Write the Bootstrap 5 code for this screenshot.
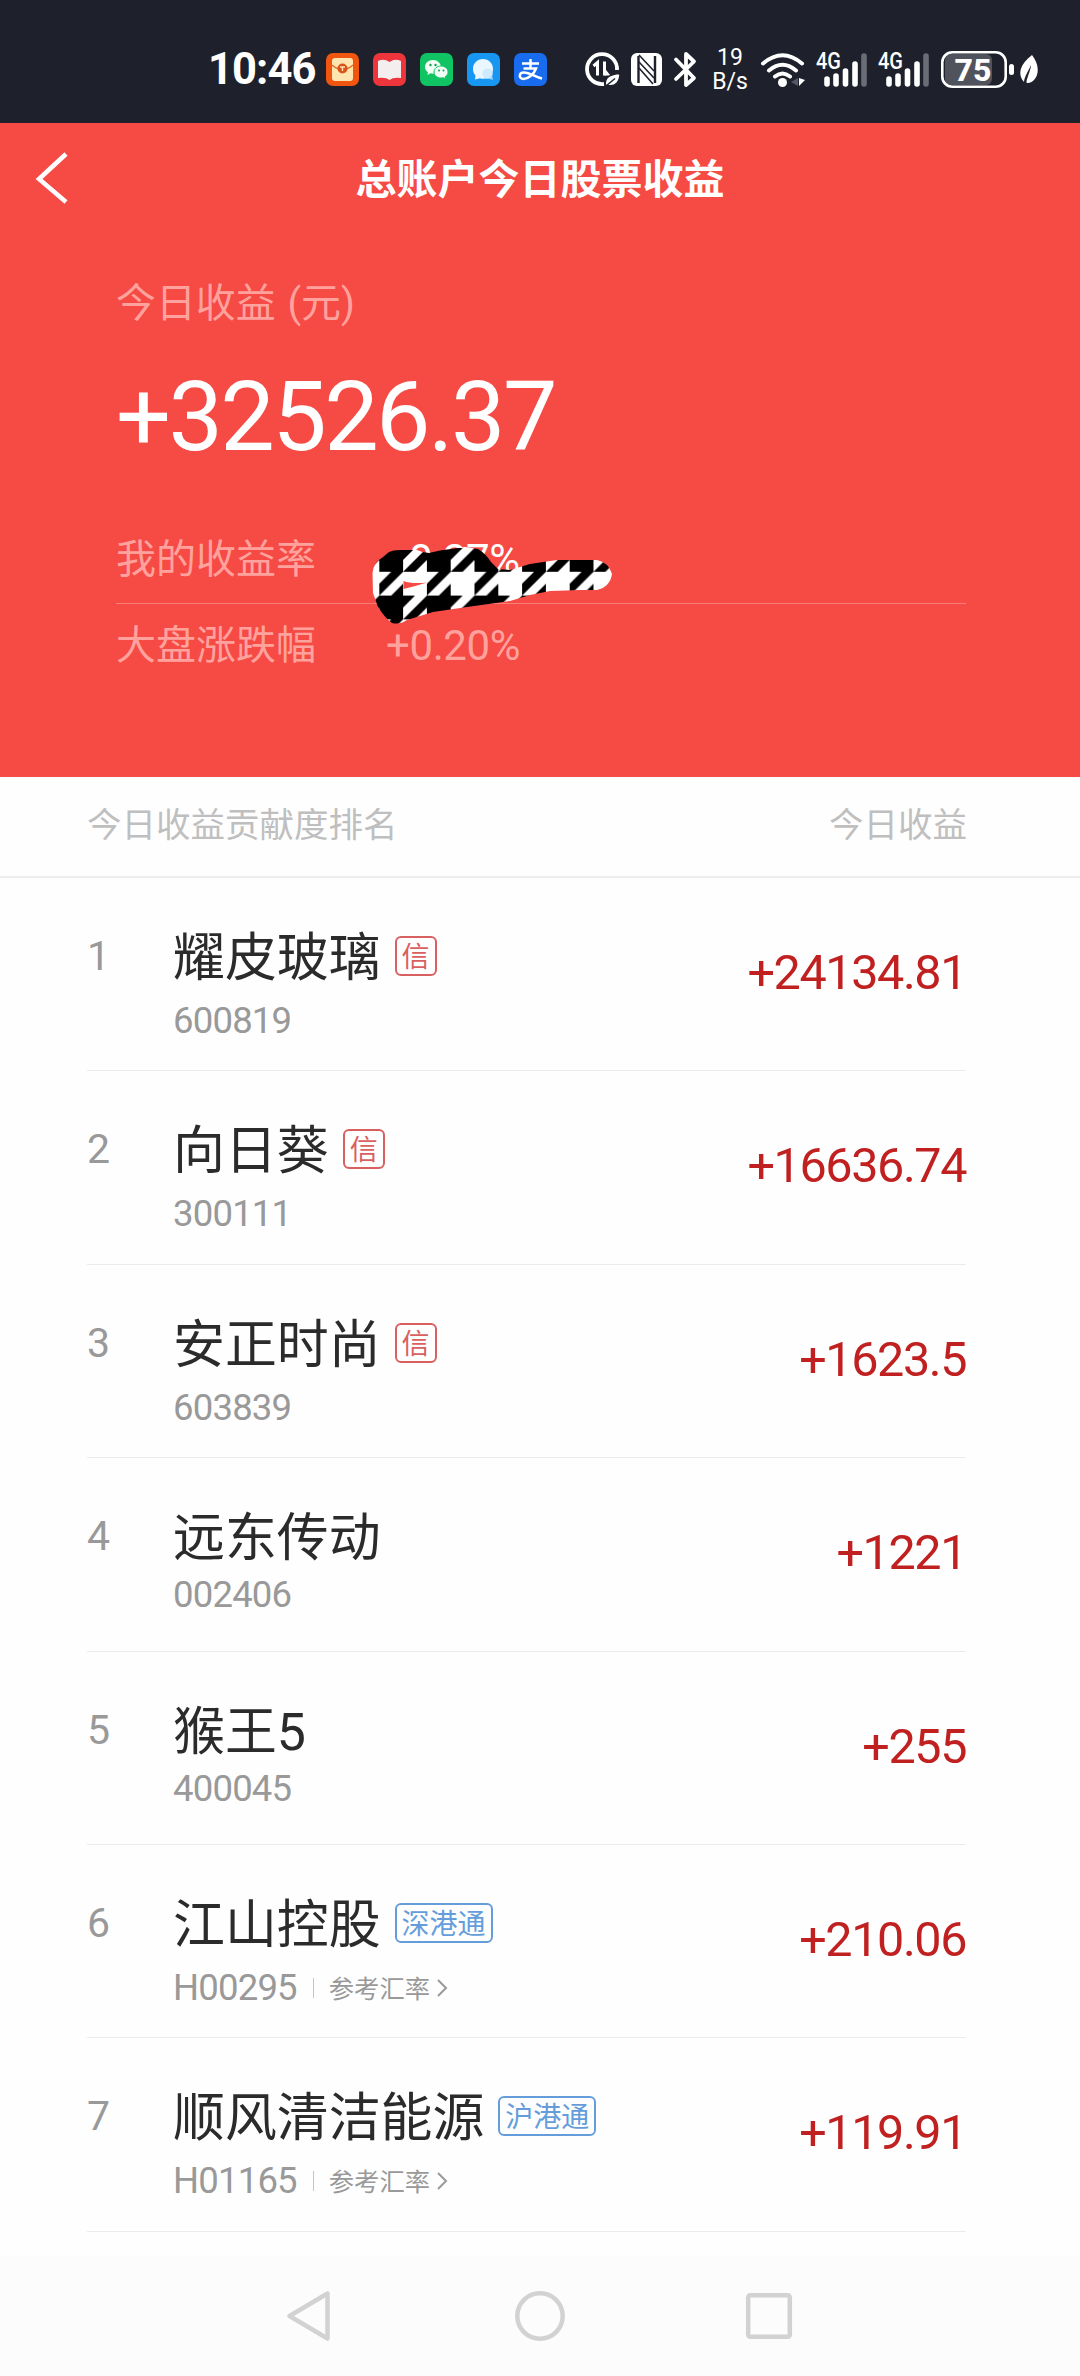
<!DOCTYPE html>
<html lang="zh-CN">
<head>
<meta charset="utf-8">
<meta name="viewport" content="width=device-width, initial-scale=1">
<title>总账户今日股票收益</title>
<link href="https://cdn.jsdelivr.net/npm/bootstrap@5.3.0/dist/css/bootstrap.min.css" rel="stylesheet">
<style>
  body { font-family: Roboto, "Noto Sans CJK SC", sans-serif; background: #fefefe; color: #2b2b2b; height: 2376px; overflow: hidden; }
  svg { display: block; flex: none; overflow: visible; }
  .status-bar { height: 123px; background: #1e212b; padding: 16px 0 0 208px; }
  .clock { font-size: 43.5px; font-weight: 700; line-height: 50px; width: 118px; letter-spacing: -.9px; }
  .app-icons { gap: 14px; width: 259px; }
  .net-speed { width: 48px; font-size: 23px; line-height: 24px; margin-left: 10px; }
  .nfc { margin-left: 11px; }
  .bluetooth { margin-left: 12px; }
  .wifi { margin-left: 7px; }
  .sig, .battery { margin-left: 11px; }
  .battery { margin-left: 12px; }
  .leaf { margin-left: 5px; }
  .hero { height: 654px; background: #f64a45; }
  .title-bar { height: 113px; }
  .title-bar h1 { font-size: 41px; font-weight: 700; line-height: 60px; }
  .back-btn { left: 35px; top: 29px; }
  .hero-body { padding: 38px 114px 0 116px; }
  .soft { color: #ffa29d; }
  .hero-label { font-size: 39.9px; line-height: 60px; word-spacing: 2px; }
  .hero-total { font-size: 97px; line-height: 110px; letter-spacing: -2.6px; margin-top: 28px; }
  .rate-line { font-size: 40px; line-height: 60px; }
  .rate-line b { font-weight: 400; font-size: 42px; letter-spacing: -.4px; margin-left: 70px; }
  .rate-first { height: 74px; margin-top: 58px; border-bottom: 1px solid #fb7e7a; }
  .rate-second { margin-top: 12px; }
  .sign { font-size: 32px; display: inline-block; width: 23px; }
  .scribble { left: 350px; top: 397px; }
  .list-head { height: 101px; padding: 0 113px 1px 87px; border-bottom: 2px solid #ededed; color: #bfbfbf; font-size: 34.5px; }
  .stock-list { padding: 0 114px 0 87px; height: 1378px; }
  .stock { height: 193.4px; border-bottom: 1px solid #ebebeb; padding-top: 48px; }
  .rank { width: 86px; font-size: 41px; line-height: 60px; color: #999; }
  .stock-name { font-size: 51.9px; height: 60px; line-height: 65px; }
  .stock-tag { font-size: 28px; line-height: 39px; height: 40px; padding: 0 5px; border: 2px solid; border-radius: 6px; margin-left: 14px; }
  .tag-red { color: #d96060; }
  .tag-blue { color: #659ddb; }
  .stock-code { font-size: 36.5px; line-height: 40px; letter-spacing: -.8px; color: #999; margin-top: 15px; }
  .plain .stock-code { margin-top: 9px; }
  .rate-link { font-size: 25.3px; letter-spacing: 0; line-height: 43px; height: 40px; }
  .rate-sep { width: 1px; height: 20px; background: #c4c4c4; margin: 0 15px 0 16px; }
  .rate-arrow { margin-left: 7px; }
  .gain { font-size: 48.5px; line-height: 60px; letter-spacing: -1.4px; color: #c02020; margin-top: 17px; }
  .nav-keys { height: 120px; background: #fcfcfc; padding: 0 288px 0 287px; }
  .home-key { margin-left: 4px; }
</style>
</head>
<body>
<header class="status-bar d-flex align-items-center text-white">
  <div class="clock">10:46</div>
  <div class="app-icons d-flex">
    <svg width="33" height="33" viewBox="0 0 33 33"><rect width="33" height="33" rx="7" fill="#f0560f"/><rect x="6" y="5" width="21" height="23" rx="3" fill="#ffe6b0"/><path d="M6 12Q16.500 21 27 12" fill="none" stroke="#e06a20" stroke-width="1.500"/><circle cx="16.500" cy="15.500" r="5" fill="#d9531a"/><path d="M14 14h5M16.500 14v4" stroke="#ffe6b0" stroke-width="1.400"/></svg>
    <svg width="33" height="33" viewBox="0 0 33 33"><rect width="33" height="33" rx="7" fill="#ee353b"/><path d="M5 8Q11 5 16.500 9Q22 5 28 8V25Q20 24 16.500 27Q13 24 5 25Z" fill="#f4eeee"/></svg>
    <svg width="33" height="33" viewBox="0 0 33 33"><rect width="33" height="33" rx="7" fill="#10c463"/><path d="M13 7C8.500 7 5 10 5 14c0 2.300 1.200 4 3 5.300L7.300 22l3.200-1.700q1.200.4 2.500.4C18 20.500 21 17.500 21 14S17.500 7 13 7Z" fill="#f2fff6"/><path d="M21 13c-4 0-7 2.600-7 6s3 6 7 6q1.200 0 2.300-.3l2.500 1.300-.6-2.200C27 22.600 28 21 28 19c0-3.400-3-6-7-6Z" fill="#f2fff6" stroke="#10c463"/><g fill="#10a050"><circle cx="10.500" cy="12" r="1.200"/><circle cx="15.500" cy="12" r="1.200"/><circle cx="19" cy="17.500" r="1"/><circle cx="23.500" cy="17.500" r="1"/></g></svg>
    <svg width="33" height="33" viewBox="0 0 33 33"><rect width="33" height="33" rx="7" fill="#1797f2"/><path d="M16 6C10 6 6 10.500 6 16c0 3 1 5 2.500 6.500L8 26.500l5-1.300q1.500.5 3 .5C22 25.700 26 21.500 26 16S22 6 16 6Z" fill="#eaf7ff"/><circle cx="20.500" cy="20.500" r="5.200" fill="#cfeafc"/><path d="M22 26l4 .8-.8-4z" fill="#9fd4fa"/></svg>
    <svg width="33" height="33" viewBox="0 0 33 33"><rect width="33" height="33" rx="7" fill="#1a6cee"/><path d="M8 10.500H25M16.500 6V15M9.500 15.500H22C20 21 14.500 26 9.500 26 4.500 26 4.500 19.500 10 19.500 16 19.500 21 24 28 25.500" fill="none" stroke="#fff" stroke-width="2.500"/></svg>
  </div>
  <!-- data saver -->
  <svg width="35" height="35" viewBox="0 0 35 35" fill="none" stroke="#fff"><path d="M19 32A15 15 0 1 1 32 18" stroke-width="3.800"/><path d="M8.500 14L12.500 10.500V23.500M19.500 9.500V23.500" stroke-width="3"/><path d="M19.500 23.500H25.500L19.500 16Z" fill="#fff" stroke="none"/><path d="M20.500 33.500C19 25 26 22 35 21.500 35 29 31 35 23 33.500Z" fill="#fff" stroke="#1e212b" stroke-width="1.500"/><path d="M21 34L30 26.500" stroke="#1e212b" stroke-width="1.500"/></svg>
  <!-- nfc -->
  <svg class="nfc" width="31" height="33" viewBox="0 0 31 33"><rect width="31" height="33" rx="6" fill="#fff"/><path d="M7.500 3V30M24 3V30" fill="none" stroke="#1e212b" stroke-width="2.400"/><path d="M8 2L23 18M8 9L23 25M8 15L22 31" fill="none" stroke="#1e212b" stroke-width="1.600"/></svg>
  <!-- bluetooth -->
  <svg class="bluetooth" width="22" height="35" viewBox="0 0 22 35" fill="none" stroke="#fff" stroke-width="3.800" stroke-linejoin="round" stroke-linecap="round"><path d="M2 7.500L20 26 12 33V2L20 9.500 2 27"/></svg>
  <div class="net-speed text-center"><div>19</div><div>B/s</div></div>
  <!-- wifi -->
  <svg class="wifi" width="44" height="34" viewBox="0 0 44 34" fill="none" stroke="#fff" stroke-width="4" stroke-linecap="round"><path d="M2 10.500Q21.500-6 41 10.500M8 17.500Q21.500 6 35 17.500M14 23.500Q21.500 17.500 29 23.500"/><circle cx="21.500" cy="29.500" r="4.500" fill="#fff" stroke="none"/><path d="M37 25v8l-7-4z" fill="#555864" stroke="none"/><path d="M38 25v8l6-6z" fill="#fff" stroke="none"/></svg>
  <svg class="sig" width="51" height="34" viewBox="0 0 51 34" stroke="#fff" stroke-width="5.600" stroke-linecap="round"><path d="M11 26v5M20 23v8M29.500 18v13M39 11v20"/><path d="M48 3v28" stroke="#6a6c76"/><text x="0" y="16" font-size="23" font-weight="500" textLength="25" lengthAdjust="spacingAndGlyphs" fill="#fff" stroke="none">4G</text></svg>
  <svg class="sig" width="51" height="34" viewBox="0 0 51 34" stroke="#fff" stroke-width="5.600" stroke-linecap="round"><path d="M11 26v5M20 23v8M29.500 18v13M39 11v20"/><path d="M48 3v28" stroke="#6a6c76"/><text x="0" y="16" font-size="23" font-weight="500" textLength="25" lengthAdjust="spacingAndGlyphs" fill="#fff" stroke="none">4G</text></svg>
  <!-- battery -->
  <svg class="battery" width="74" height="37" viewBox="0 0 74 37"><rect x="4" y="3" width="47" height="31" rx="6" fill="#50525c"/><rect x="1.300" y="1.300" width="63.400" height="34.400" rx="10" fill="none" stroke="#fff" stroke-width="2.600"/><rect x="68" y="13" width="5" height="11" rx="2.500" fill="#fff"/><text x="32" y="30" text-anchor="middle" font-size="32" font-weight="800" fill="#fff">75</text></svg>
  <svg class="leaf" width="18" height="30" viewBox="0 0 18 30"><path d="M12 0C19 9 20 20 13 26Q10 28.500 7 28C5 27 11 15 11 10 9 15 4 22 4 27 -3 19 0 9 12 0Z" fill="#fff"/></svg>
</header>

<section class="hero position-relative text-white">
  <div class="title-bar d-flex align-items-center justify-content-center">
    <a class="back-btn position-absolute" href="#" aria-label="返回"><svg width="34" height="52" viewBox="0 0 34 52" fill="none" stroke="#fff" stroke-width="4.500"><path d="M31 2L4 27 31 50"/></svg></a>
    <h1 class="m-0">总账户今日股票收益</h1>
  </div>
  <div class="hero-body">
    <div class="hero-label soft">今日收益 (元)</div>
    <div class="hero-total">+32526.37</div>
    <div class="rate-line rate-first d-flex"><span class="soft">我的收益率</span><b><span class="sign">+</span>0.27%</b></div>
    <div class="rate-line rate-second soft d-flex"><span>大盘涨跌幅</span><b>+0.20%</b></div>
  </div>
  <svg class="scribble position-absolute" width="280" height="120" viewBox="0 0 280 120">
    <defs>
      <pattern id="hound" x="29.300" y="28" width="47.600" height="47.600" patternUnits="userSpaceOnUse" viewBox="0 0 4 4">
        <rect width="4" height="4" fill="#fff"/>
        <path d="M0 0H3L2 1V2H0ZM4 0V1L3 2H2ZM1 2H2L0 4V3ZM2 3V4H1Z" fill="#000"/>
      </pattern>
    </defs>
    <path d="M22.500 53Q23 43 33 37L39 32Q44 29.500 52 30H67Q73 33 79 33L90 30.500 115 27 128 29Q136 34 141 42L148 49 160 50 180 44 207 40H247Q258 42 262 54 260 67 247 70H230L200 71 180 75 160 81 117 87 83 92 57 100Q50 105 42 103 35 98 28 87L23 73Z" fill="url(#hound)"/>
    <path d="M53.500 61Q61 64 77 62.500 66 66 53.500 69Z" fill="#f64a45"/>
  </svg>
</section>

<section class="list-head d-flex justify-content-between align-items-center"><span>今日收益贡献度排名</span><span>今日收益</span></section>

<main class="stock-list">
  <div class="stock d-flex">
    <div class="rank">1</div>
    <div class="flex-grow-1"><div class="d-flex align-items-center"><span class="stock-name">耀皮玻璃</span><span class="stock-tag tag-red">信</span></div><div class="stock-code">600819</div></div>
    <div class="gain">+24134.81</div>
  </div>
  <div class="stock d-flex">
    <div class="rank">2</div>
    <div class="flex-grow-1"><div class="d-flex align-items-center"><span class="stock-name">向日葵</span><span class="stock-tag tag-red">信</span></div><div class="stock-code">300111</div></div>
    <div class="gain">+16636.74</div>
  </div>
  <div class="stock d-flex">
    <div class="rank">3</div>
    <div class="flex-grow-1"><div class="d-flex align-items-center"><span class="stock-name">安正时尚</span><span class="stock-tag tag-red">信</span></div><div class="stock-code">603839</div></div>
    <div class="gain">+1623.5</div>
  </div>
  <div class="stock plain d-flex">
    <div class="rank">4</div>
    <div class="flex-grow-1"><div class="d-flex align-items-center"><span class="stock-name">远东传动</span></div><div class="stock-code">002406</div></div>
    <div class="gain">+1221</div>
  </div>
  <div class="stock plain d-flex">
    <div class="rank">5</div>
    <div class="flex-grow-1"><div class="d-flex align-items-center"><span class="stock-name">猴王5</span></div><div class="stock-code">400045</div></div>
    <div class="gain">+255</div>
  </div>
  <div class="stock d-flex">
    <div class="rank">6</div>
    <div class="flex-grow-1"><div class="d-flex align-items-center"><span class="stock-name">江山控股</span><span class="stock-tag tag-blue">深港通</span></div><div class="stock-code d-flex align-items-center"><span>H00295</span><i class="rate-sep"></i><span class="rate-link">参考汇率</span><svg class="rate-arrow" width="10" height="18" viewBox="0 0 10 18" fill="none" stroke="#999" stroke-width="2"><path d="M1 1L9 9 1 17"/></svg></div></div>
    <div class="gain">+210.06</div>
  </div>
  <div class="stock d-flex">
    <div class="rank">7</div>
    <div class="flex-grow-1"><div class="d-flex align-items-center"><span class="stock-name">顺风清洁能源</span><span class="stock-tag tag-blue">沪港通</span></div><div class="stock-code d-flex align-items-center"><span>H01165</span><i class="rate-sep"></i><span class="rate-link">参考汇率</span><svg class="rate-arrow" width="10" height="18" viewBox="0 0 10 18" fill="none" stroke="#999" stroke-width="2"><path d="M1 1L9 9 1 17"/></svg></div></div>
    <div class="gain">+119.91</div>
  </div>
</main>

<footer class="nav-keys d-flex justify-content-between align-items-center">
  <svg width="43" height="50" viewBox="0 0 43 50" fill="none" stroke="#d2d2d2" stroke-width="4.500" stroke-linejoin="round"><path d="M40.500 2.500V47.500L2.500 25Z"/></svg>
  <svg class="home-key" width="50" height="50" viewBox="0 0 50 50" fill="none" stroke="#d2d2d2" stroke-width="4.500"><circle cx="25" cy="25" r="22.700"/></svg>
  <svg width="46" height="46" viewBox="0 0 46 46" fill="none" stroke="#d2d2d2" stroke-width="4.500"><rect x="2.200" y="2.200" width="41.600" height="41.600" rx="2"/></svg>
</footer>
<script src="https://cdn.jsdelivr.net/npm/bootstrap@5.3.0/dist/js/bootstrap.bundle.min.js"></script>
</body>
</html>
